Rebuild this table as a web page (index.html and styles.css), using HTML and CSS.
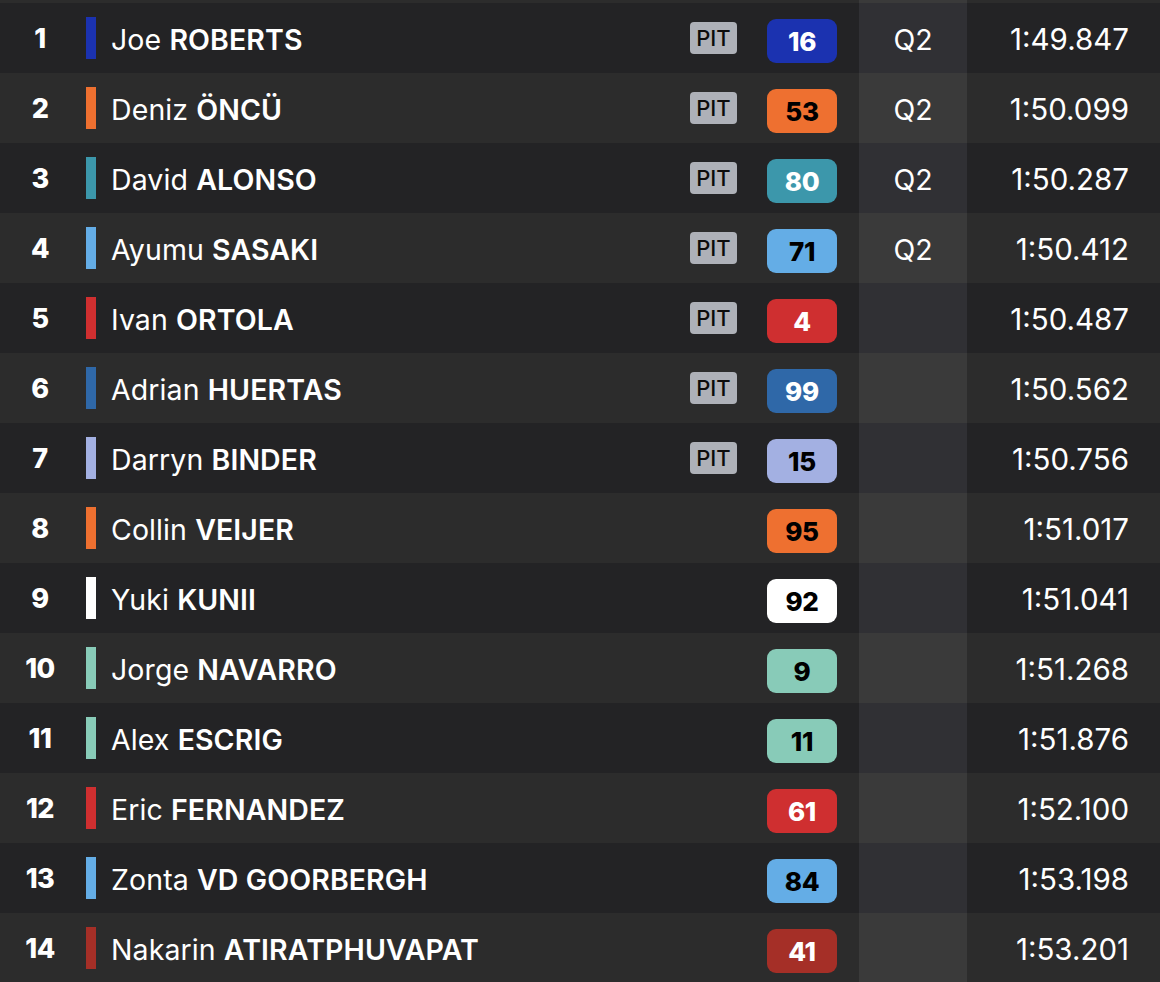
FILE: index.html
```html
<!DOCTYPE html>
<html lang="en">
<head>
<meta charset="utf-8">
<title>Classification</title>
<link rel="stylesheet" href="styles.css">
</head>
<body>
<div class="table">
  <div class="row even top"><div class="pos"></div><div class="bar none"></div><div class="name"></div><div class="pit blank"></div><div class="num blank"></div><div class="q"></div><div class="time"></div></div>

  <div class="row odd"><div class="pos">1</div><div class="bar c-blue"></div><div class="name">Joe <b>ROBERTS</b></div><div class="pit">PIT</div><div class="num c-blue light">16</div><div class="q">Q2</div><div class="time">1:49.847</div></div>
  <div class="row even"><div class="pos">2</div><div class="bar c-orange"></div><div class="name">Deniz <b>ÖNCÜ</b></div><div class="pit">PIT</div><div class="num c-orange">53</div><div class="q">Q2</div><div class="time">1:50.099</div></div>
  <div class="row odd"><div class="pos">3</div><div class="bar c-teal"></div><div class="name">David <b>ALONSO</b></div><div class="pit">PIT</div><div class="num c-teal light">80</div><div class="q">Q2</div><div class="time">1:50.287</div></div>
  <div class="row even"><div class="pos">4</div><div class="bar c-sky"></div><div class="name">Ayumu <b>SASAKI</b></div><div class="pit">PIT</div><div class="num c-sky">71</div><div class="q">Q2</div><div class="time">1:50.412</div></div>
  <div class="row odd"><div class="pos">5</div><div class="bar c-red"></div><div class="name">Ivan <b>ORTOLA</b></div><div class="pit">PIT</div><div class="num c-red light">4</div><div class="q"></div><div class="time">1:50.487</div></div>
  <div class="row even"><div class="pos">6</div><div class="bar c-navy"></div><div class="name">Adrian <b>HUERTAS</b></div><div class="pit">PIT</div><div class="num c-navy light">99</div><div class="q"></div><div class="time">1:50.562</div></div>
  <div class="row odd"><div class="pos">7</div><div class="bar c-lav"></div><div class="name">Darryn <b>BINDER</b></div><div class="pit">PIT</div><div class="num c-lav">15</div><div class="q"></div><div class="time">1:50.756</div></div>
  <div class="row even"><div class="pos">8</div><div class="bar c-orange"></div><div class="name">Collin <b>VEIJER</b></div><div class="pit blank"></div><div class="num c-orange">95</div><div class="q"></div><div class="time">1:51.017</div></div>
  <div class="row odd"><div class="pos">9</div><div class="bar c-white"></div><div class="name">Yuki <b>KUNII</b></div><div class="pit blank"></div><div class="num c-white">92</div><div class="q"></div><div class="time">1:51.041</div></div>
  <div class="row even"><div class="pos">10</div><div class="bar c-mint"></div><div class="name">Jorge <b>NAVARRO</b></div><div class="pit blank"></div><div class="num c-mint">9</div><div class="q"></div><div class="time">1:51.268</div></div>
  <div class="row odd"><div class="pos">11</div><div class="bar c-mint"></div><div class="name">Alex <b>ESCRIG</b></div><div class="pit blank"></div><div class="num c-mint">11</div><div class="q"></div><div class="time">1:51.876</div></div>
  <div class="row even"><div class="pos">12</div><div class="bar c-red"></div><div class="name">Eric <b>FERNANDEZ</b></div><div class="pit blank"></div><div class="num c-red light">61</div><div class="q"></div><div class="time">1:52.100</div></div>
  <div class="row odd"><div class="pos">13</div><div class="bar c-sky"></div><div class="name">Zonta <b>VD GOORBERGH</b></div><div class="pit blank"></div><div class="num c-sky">84</div><div class="q"></div><div class="time">1:53.198</div></div>
  <div class="row even"><div class="pos">14</div><div class="bar c-maroon"></div><div class="name">Nakarin <b>ATIRATPHUVAPAT</b></div><div class="pit blank"></div><div class="num c-maroon light">41</div><div class="q"></div><div class="time">1:53.201</div></div>
</div>
</body>
</html>
```
FILE: styles.css
```css
html, body {
  margin: 0;
  padding: 0;
  background: #2c2c2c;
}
body {
  font-family: "Inter", "Liberation Sans", sans-serif;
  color: #ffffff;
  overflow: hidden;
}
.table {
  display: flex;
  flex-direction: column;
  width: 1160px;
}
.row {
  display: flex;
  align-items: center;
  height: 70px;
  flex-shrink: 0;
}
.row.top {
  height: 3px;
  overflow: hidden;
}
.row.odd { background: #232325; }
.row.even { background: #2c2c2c; }

.pos {
  width: 80px;
  text-align: center;
  font-weight: 800;
  font-size: 27px;
  letter-spacing: -0.5px;
}
.bar {
  width: 10px;
  height: 42px;
  margin-left: 6px;
}
.name {
  flex: 1;
  margin-left: 15px;
  padding-top: 2px;
  font-size: 28.5px;
  font-weight: 400;
  white-space: nowrap;
  letter-spacing: 0.1px;
}
.name b { font-weight: 600; }

.pit {
  width: 47px;
  height: 32px;
  border-radius: 4px;
  background: #aeb1b8;
  color: #0c0c0c;
  font-size: 22px;
  font-weight: 500;
  display: flex;
  align-items: center;
  justify-content: center;
}
.pit.blank, .num.blank { background: transparent; }

.num {
  width: 70px;
  height: 44px;
  margin-left: 30px;
  margin-top: 6px;
  border-radius: 9px;
  color: #000000;
  font-size: 26px;
  font-weight: 800;
  display: flex;
  align-items: center;
  justify-content: center;
  letter-spacing: -0.3px;
}
.num.light { color: #ffffff; }

.q {
  width: 108px;
  margin-left: 22px;
  align-self: stretch;
  display: flex;
  align-items: center;
  justify-content: center;
  padding-top: 2px;
  box-sizing: border-box;
  font-size: 28.5px;
}
.row.odd .q { background: #303034; }
.row.even .q { background: #3a3a3a; }

.time {
  width: 193px;
  box-sizing: border-box;
  text-align: right;
  padding-right: 31px;
  padding-top: 2px;
  font-size: 29.5px;
}

.c-blue { background: #1b32b0; }
.c-orange { background: #ee7030; }
.c-teal { background: #3c97ab; }
.c-sky { background: #64ade6; }
.c-red { background: #cf2f30; }
.c-navy { background: #2f68a8; }
.c-lav { background: #a3b0e2; }
.c-white { background: #ffffff; }
.c-mint { background: #88cbb8; }
.c-maroon { background: #a52f27; }
```
